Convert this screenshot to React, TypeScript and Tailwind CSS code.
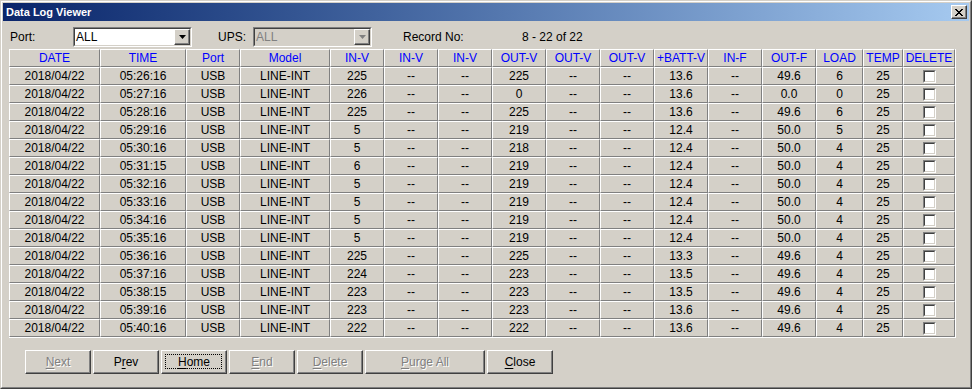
import React from "react";

const rows: string[][] = [
  ["05:26:16", "225", "225", "13.6", "49.6", "6"],
  ["05:27:16", "226", "0", "13.6", "0.0", "0"],
  ["05:28:16", "225", "225", "13.6", "49.6", "6"],
  ["05:29:16", "5", "219", "12.4", "50.0", "5"],
  ["05:30:16", "5", "218", "12.4", "50.0", "4"],
  ["05:31:15", "6", "219", "12.4", "50.0", "4"],
  ["05:32:16", "5", "219", "12.4", "50.0", "4"],
  ["05:33:16", "5", "219", "12.4", "50.0", "4"],
  ["05:34:16", "5", "219", "12.4", "50.0", "4"],
  ["05:35:16", "5", "219", "12.4", "50.0", "4"],
  ["05:36:16", "225", "225", "13.3", "49.6", "4"],
  ["05:37:16", "224", "223", "13.5", "49.6", "4"],
  ["05:38:15", "223", "223", "13.5", "49.6", "4"],
  ["05:39:16", "223", "223", "13.6", "49.6", "4"],
  ["05:40:16", "222", "222", "13.6", "49.6", "4"],
];

const headers = [
  "DATE", "TIME", "Port", "Model", "IN-V", "IN-V", "IN-V", "OUT-V", "OUT-V", "OUT-V",
  "+BATT-V", "IN-F", "OUT-F", "LOAD", "TEMP", "DELETE",
];

const cell =
  "h-[18px] flex items-center justify-center border-l border-t border-l-white border-t-white border-r border-b border-r-[#808080] border-b-[#808080] whitespace-nowrap overflow-hidden";

function Checkbox() {
  return (
    <div className="w-[13px] h-[13px] border-t border-l border-t-[#808080] border-l-[#808080] border-b border-r border-b-white border-r-white">
      <div className="w-full h-full bg-white border-t border-l border-t-[#404040] border-l-[#404040] border-b border-r border-b-[#d4d0c8] border-r-[#d4d0c8]" />
    </div>
  );
}

function Arrow({ disabled }: { disabled?: boolean }) {
  return (
    <svg width="7" height="4" viewBox="0 0 7 4">
      <path d="M0 0h7L3.5 4z" fill={disabled ? "#808080" : "#000"} />
    </svg>
  );
}

function Combo({ value, disabled }: { value: string; disabled?: boolean }) {
  return (
    <div className="w-[119px] h-[20px] border-t border-l border-t-[#808080] border-l-[#808080] border-b border-r border-b-white border-r-white">
      <div
        className={`w-full h-full flex items-stretch border-t border-l border-t-[#404040] border-l-[#404040] border-b border-r border-b-[#d4d0c8] border-r-[#d4d0c8] ${
          disabled ? "bg-[#d4d0c8]" : "bg-white"
        }`}
      >
        <div className={`flex-1 flex items-center pl-[1px] ${disabled ? "text-[#808080]" : "text-black"}`}>
          {value}
        </div>
        <div className="w-[16px] flex items-center justify-center bg-[#d4d0c8] border-t border-l border-t-white border-l-white border-b border-r border-b-[#404040] border-r-[#404040] shadow-[inset_-1px_-1px_#808080]">
          <Arrow disabled={disabled} />
        </div>
      </div>
    </div>
  );
}

function Btn({
  label,
  u,
  w,
  disabled,
  focus,
}: {
  label: string;
  u: number;
  w: string;
  disabled?: boolean;
  focus?: boolean;
}) {
  const text = (
    <span>
      {label.slice(0, u)}
      <span className="underline underline-offset-2">{label[u]}</span>
      {label.slice(u + 1)}
    </span>
  );
  return (
    <div
      className={`${w} h-[24px] relative flex items-center justify-center bg-[#d4d0c8] border-t border-l border-t-white border-l-white border-b border-r border-b-[#404040] border-r-[#404040] shadow-[inset_-1px_-1px_#808080] ${
        disabled ? "text-[#808080] [text-shadow:1px_1px_0_#fff]" : "text-black"
      }`}
    >
      {text}
      {focus && <div className="absolute left-[3px] top-[3px] right-[4px] bottom-[4px] border border-dotted border-black" />}
    </div>
  );
}

export default function App() {
  return (
    <div
      className="w-[972px] h-[389px] bg-[#d4d0c8] text-[12px] text-black border-t border-l border-t-[#d4d0c8] border-l-[#d4d0c8] border-b border-r border-b-[#404040] border-r-[#404040]"
      style={{ fontFamily: '"Liberation Sans", Arial, sans-serif' }}
    >
      <div className="w-full h-full border-t border-l border-t-white border-l-white border-b border-r border-b-[#808080] border-r-[#808080] p-[1px] flex flex-col">
        {/* Title bar */}
        <div className="h-[18px] flex items-center justify-between bg-gradient-to-r from-[#0a246a] to-[#a6caf0] pl-[3px] pr-[2px]">
          <span className="text-white font-bold text-[11px] leading-none">Data Log Viewer</span>
          <div className="w-[16px] h-[14px] flex items-center justify-center bg-[#d4d0c8] border-t border-l border-t-white border-l-white border-b border-r border-b-[#404040] border-r-[#404040] shadow-[inset_-1px_-1px_#808080]">
            <svg width="8" height="7" viewBox="0 0 8 7" shapeRendering="crispEdges">
              <path d="M0 0h2v1H0zM6 0h2v1H6zM1 1h2v1H1zM5 1h2v1H5zM2 2h4v1H2zM3 3h2v1H3zM2 4h4v1H2zM1 5h2v1H1zM5 5h2v1H5zM0 6h2v1H0zM6 6h2v1H6z" fill="#000" />
            </svg>
          </div>
        </div>

        {/* Body */}
        <div className="flex-1 flex flex-col px-[6px]">
          <div className="mt-[6px] h-[20px] flex items-center pl-[1px]">
            <div className="w-[63px]">Port:</div>
            <Combo value="ALL" />
            <div className="w-[26px]" />
            <div className="w-[35px]">UPS:</div>
            <Combo value="ALL" disabled />
            <div className="w-[31px]" />
            <div className="w-[119px]">Record No:</div>
            <div>8 - 22 of 22</div>
          </div>

          <div className="mt-[2px] w-[947px] border-r border-b border-r-white border-b-white">
            <div className="grid grid-cols-[91px_86px_54px_90px_54px_54px_54px_54px_54px_54px_54px_54px_54px_47px_40px_52px]">
              {headers.map((h, i) => (
                <div key={"h" + i} className={`${cell} text-[#0000ff]`}>
                  {h}
                </div>
              ))}
              {rows.map((r, ri) => {
                const vals = [
                  "2018/04/22", r[0], "USB", "LINE-INT", r[1], "--", "--", r[2], "--", "--",
                  r[3], "--", r[4], r[5], "25",
                ];
                return (
                  <React.Fragment key={ri}>
                    {vals.map((v, ci) => (
                      <div key={ci} className={cell}>
                        {v}
                      </div>
                    ))}
                    <div className={cell}>
                      <Checkbox />
                    </div>
                  </React.Fragment>
                );
              })}
            </div>
          </div>

          <div className="mt-[12px] ml-[16px] flex gap-[2px]">
            <Btn label="Next" u={0} w="w-[66px]" disabled />
            <Btn label="Prev" u={1} w="w-[66px]" />
            <Btn label="Home" u={0} w="w-[66px]" focus />
            <Btn label="End" u={0} w="w-[66px]" disabled />
            <Btn label="Delete" u={0} w="w-[66px]" disabled />
            <Btn label="Purge All" u={0} w="w-[120px]" disabled />
            <Btn label="Close" u={0} w="w-[66px]" />
          </div>
        </div>
      </div>
    </div>
  );
}
